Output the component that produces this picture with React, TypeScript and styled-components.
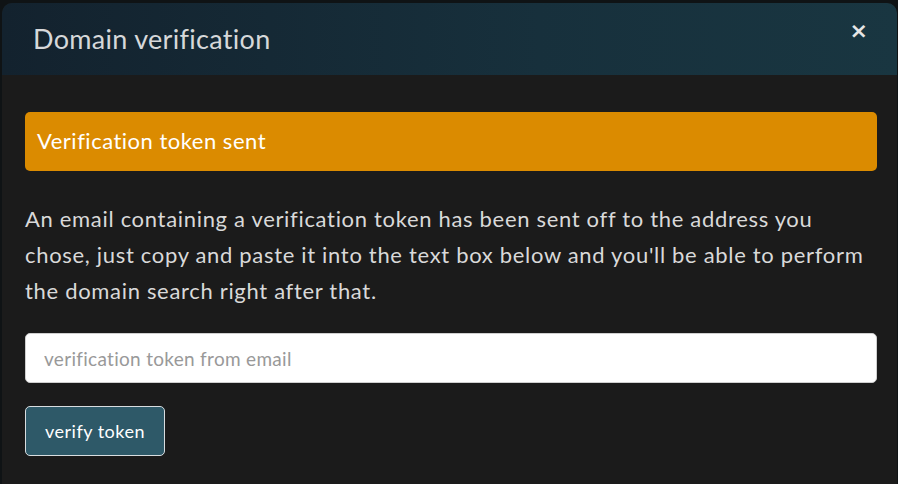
import styled, { createGlobalStyle } from "styled-components";

const GlobalStyle = createGlobalStyle`
  html, body {
    margin: 0;
    padding: 0;
    background: #0f1315;
    font-family: Lato, "Open Sans", sans-serif;
  }
`;

const Page = styled.div`
  height: 484px;
  overflow: hidden;
  padding: 3px 0 0 2px;
  box-sizing: border-box;
`;

const Modal = styled.div`
  width: 895px;
  height: 520px;
  background: #1b1b1b;
  border-radius: 10px 10px 0 0;
  overflow: hidden;
`;

const Header = styled.div`
  height: 72px;
  display: flex;
  align-items: center;
  justify-content: space-between;
  padding: 0 29px 0 31px;
  background: linear-gradient(90deg, #13222e 0%, #17303c 60%, #193641 100%);
`;

const Title = styled.h2`
  margin: 0;
  font-size: 27px;
  font-weight: 400;
  letter-spacing: 0.3px;
  color: #d6d8da;
  padding-bottom: 2px;
`;

const Close = styled.button`
  background: none;
  border: none;
  padding: 0;
  margin-top: -16px;
  color: #e6e6e6;
  font-size: 22px;
  font-weight: 700;
  line-height: 1;
  cursor: pointer;
  font-family: "DejaVu Sans", sans-serif;
`;

const Body = styled.div`
  padding: 37px 20px 0 23px;
  display: flex;
  flex-direction: column;
`;

const Alert = styled.div`
  height: 59px;
  display: flex;
  align-items: center;
  padding: 0 12px 2px;
  background: #db8b00;
  border-radius: 5px;
  color: #ffffff;
  font-size: 22px;
  letter-spacing: 0.5px;
  box-sizing: border-box;
`;

const Text = styled.p`
  margin: 30px 0 24px;
  font-size: 22px;
  letter-spacing: 0.68px;
  line-height: 36px;
  color: #d9d9d9;
`;

const Input = styled.input`
  height: 50px;
  box-sizing: border-box;
  border: 1px solid #cfcfcf;
  border-radius: 5px;
  background: #ffffff;
  padding: 0 18px;
  font-family: inherit;
  font-size: 19px;
  letter-spacing: 0.3px;
  color: #333;
  outline: none;

  &::placeholder {
    color: #999999;
  }
`;

const Button = styled.button`
  align-self: flex-start;
  margin-top: 23px;
  height: 50px;
  padding: 0 19px;
  background: #2e5968;
  border: 1px solid #d8dde0;
  border-radius: 5px;
  color: #ffffff;
  font-family: inherit;
  font-size: 18px;
  letter-spacing: 0.5px;
  cursor: pointer;
`;

export default function App() {
  return (
    <>
      <GlobalStyle />
      <Page>
        <Modal>
          <Header>
            <Title>Domain verification</Title>
            <Close aria-label="close">×</Close>
          </Header>
          <Body>
            <Alert>Verification token sent</Alert>
            <Text>
              An email containing a verification token has been sent off to the
              address you chose, just copy and paste it into the text box below
              and you'll be able to perform the domain search right after that.
            </Text>
            <Input placeholder="verification token from email" />
            <Button>verify token</Button>
          </Body>
        </Modal>
      </Page>
    </>
  );
}
